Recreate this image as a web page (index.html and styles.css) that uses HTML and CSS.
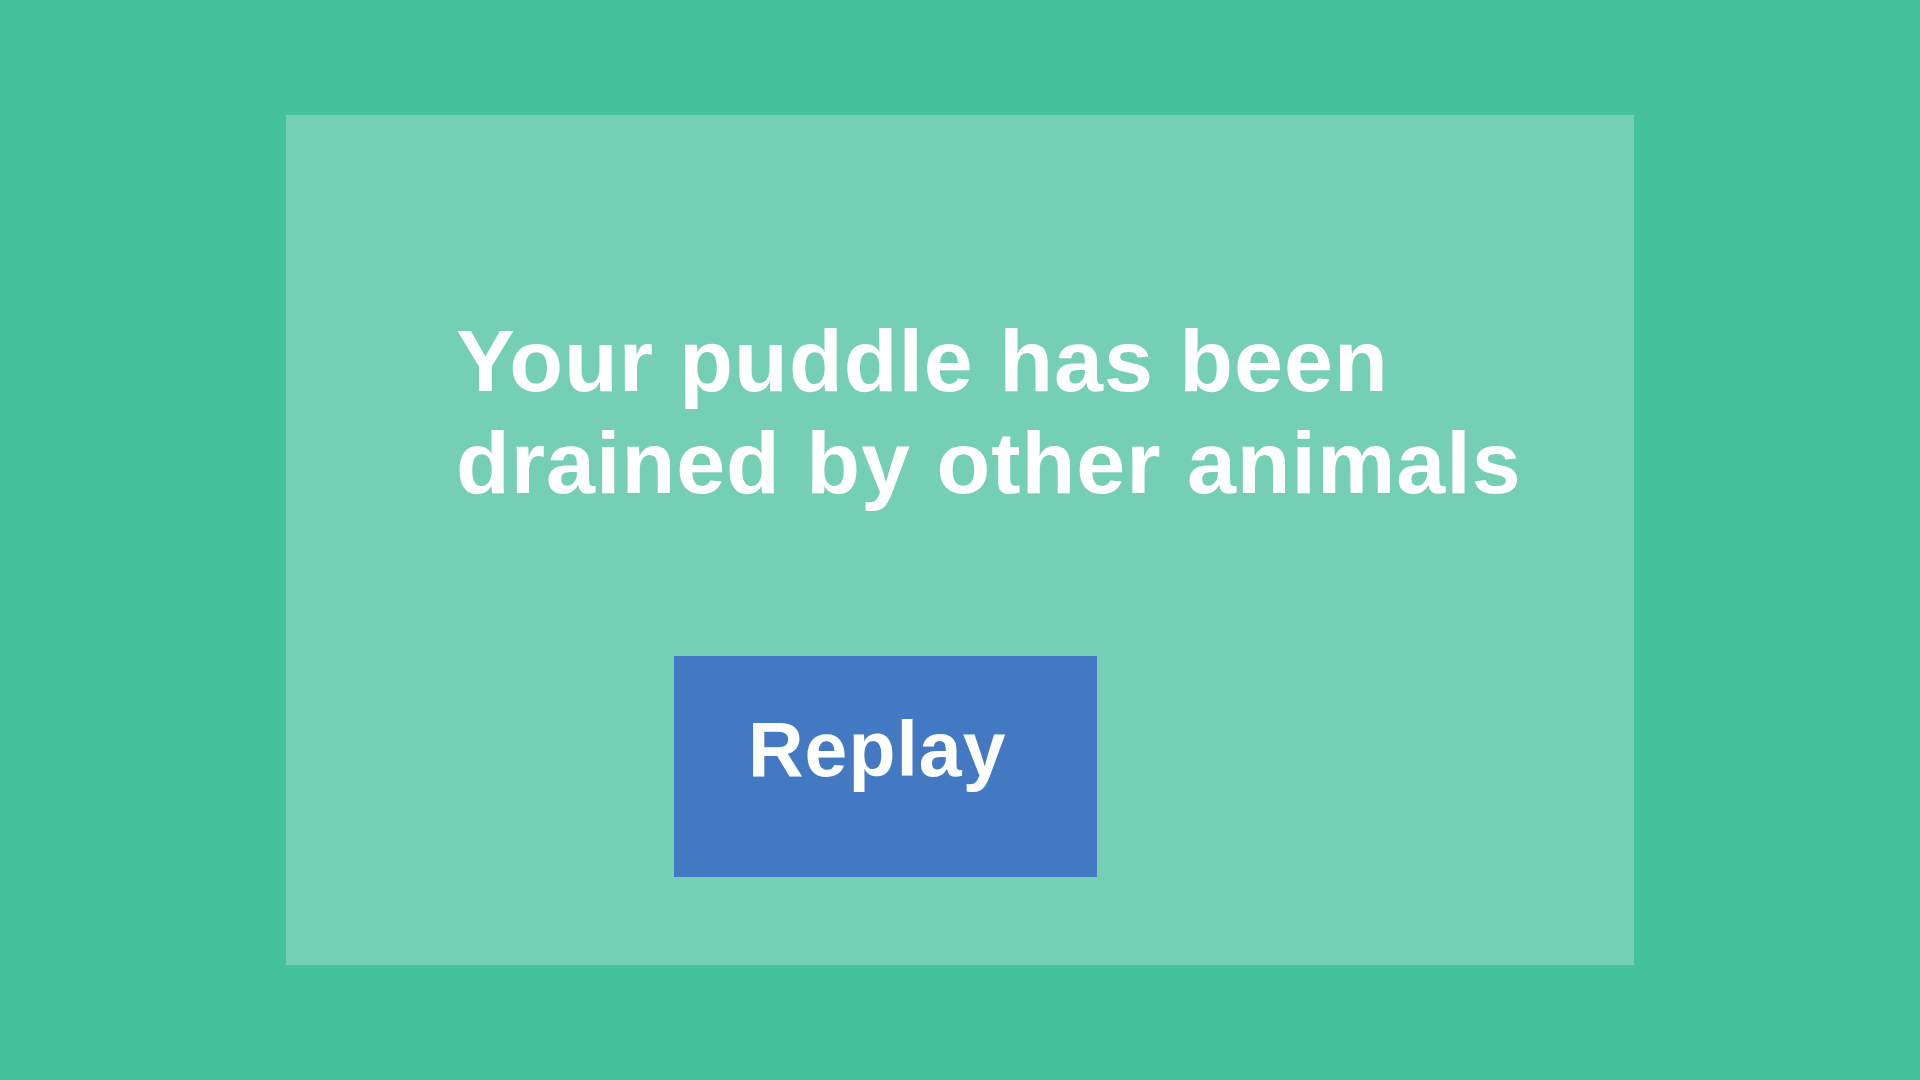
FILE: index.html
```html
<!DOCTYPE html>
<html lang="en">
<head>
<meta charset="utf-8">
<title>Game over</title>
<link rel="stylesheet" href="styles.css">
</head>
<body>
<main class="panel">
  <h1 class="message">Your puddle has been drained by other animals</h1>
  <button class="replay" type="button">Replay</button>
</main>
</body>
</html>
```
FILE: styles.css
```css
html, body {
  margin: 0;
  padding: 0;
}
body {
  width: 1920px;
  height: 1080px;
  background: #44c29c;
  font-family: "Liberation Sans", Arial, sans-serif;
  display: flex;
  align-items: center;
  justify-content: center;
  overflow: hidden;
}
.panel {
  box-sizing: border-box;
  width: 1348px;
  height: 850px;
  background: #75cfb4;
  padding: 195px 0 0 170px;
  display: flex;
  flex-direction: column;
  align-items: flex-start;
}
.message {
  margin: 0;
  width: 1120px;
  font-size: 88px;
  font-weight: bold;
  line-height: normal;
  letter-spacing: 1px;
  color: #ffffff;
}
.replay {
  margin: 142px 0 0 218px;
  box-sizing: border-box;
  width: 423px;
  height: 221px;
  border: none;
  background: #4279c2;
  color: #ffffff;
  font-family: "Liberation Sans", Arial, sans-serif;
  font-size: 77px;
  font-weight: bold;
  line-height: normal;
  letter-spacing: 1px;
  text-align: left;
  padding: 49px 0 0 74px;
  display: flex;
  align-items: flex-start;
  cursor: pointer;
}
```
